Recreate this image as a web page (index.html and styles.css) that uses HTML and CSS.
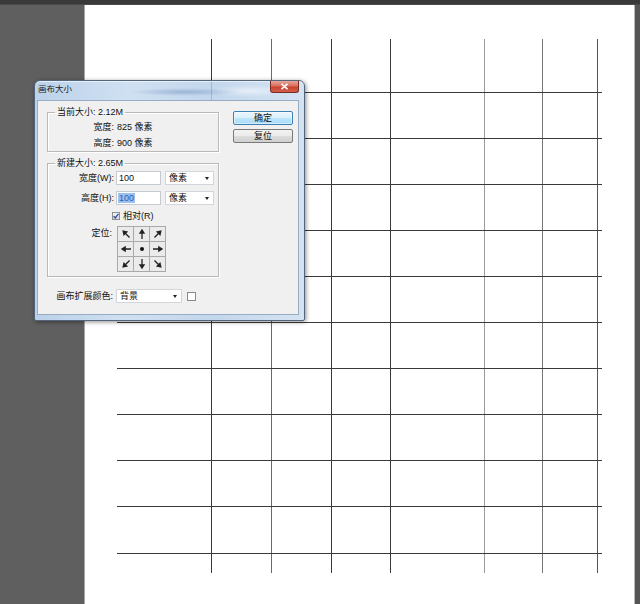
FILE: index.html
```html
<!DOCTYPE html>
<html lang="zh-CN">
<head>
<meta charset="utf-8">
<title>画布大小</title>
<link rel="stylesheet" href="styles.css">
</head>
<body>
<div class="app">
  <div class="topbar"></div>
  <div class="workspace">
    <div class="pasteboard"></div>
    <div class="canvas">
      <svg class="grid" width="549" height="599" viewBox="0 0 549 599">
        <g class="v">
          <line x1="126.5" y1="34" x2="126.5" y2="568" stroke="#3a3a3a"/>
          <line x1="186.5" y1="34" x2="186.5" y2="568" stroke="#6a6a6a"/>
          <line x1="246.5" y1="34" x2="246.5" y2="568" stroke="#3a3a3a"/>
          <line x1="305.5" y1="34" x2="305.5" y2="568" stroke="#3a3a3a"/>
          <line x1="399.5" y1="34" x2="399.5" y2="568" stroke="#9a9a9a"/>
          <line x1="457.5" y1="34" x2="457.5" y2="568" stroke="#777777"/>
          <line x1="512.5" y1="34" x2="512.5" y2="568" stroke="#555555"/>
        </g>
        <g class="h" stroke="#3a3a3a">
          <line x1="32" y1="87.5" x2="517" y2="87.5"/>
          <line x1="32" y1="133.5" x2="517" y2="133.5"/>
          <line x1="32" y1="179.5" x2="517" y2="179.5"/>
          <line x1="32" y1="225.5" x2="517" y2="225.5"/>
          <line x1="32" y1="271.5" x2="517" y2="271.5"/>
          <line x1="32" y1="317.5" x2="517" y2="317.5"/>
          <line x1="32" y1="363.5" x2="517" y2="363.5"/>
          <line x1="32" y1="409.5" x2="517" y2="409.5"/>
          <line x1="32" y1="455.5" x2="517" y2="455.5"/>
          <line x1="32" y1="501.5" x2="517" y2="501.5"/>
          <line x1="32" y1="548.5" x2="517" y2="548.5"/>
        </g>
      </svg>
    </div>
    <div class="rightbar"></div>
  </div>

  <div class="dialog">
    <div class="titlebar">
      <span class="title">画布大小</span>
      <span class="close"><svg width="9" height="7" viewBox="0 0 9 7"><path d="M1.5 0.8 7.5 6.2M7.5 0.8 1.5 6.2" stroke="#fff" stroke-width="1.6"/></svg></span>
    </div>
    <div class="client">
      <div class="left">
        <fieldset class="group g1">
          <legend>当前大小: 2.12M</legend>
          <div class="info-row"><span class="lbl">宽度:</span><span class="val">825 像素</span></div>
          <div class="info-row"><span class="lbl">高度:</span><span class="val">900 像素</span></div>
        </fieldset>
        <fieldset class="group g2">
          <legend>新建大小: 2.65M</legend>
          <div class="form-row">
            <span class="lbl">宽度(W):</span>
            <span class="input">100</span>
            <span class="select">像素<i class="caret"></i></span>
          </div>
          <div class="form-row">
            <span class="lbl">高度(H):</span>
            <span class="input"><span class="sel">100</span></span>
            <span class="select">像素<i class="caret"></i></span>
          </div>
          <div class="check-row">
            <span class="checkbox"><svg width="6" height="6" viewBox="0 0 6 6"><path d="M0.6 3.2 2.3 5 5.4 0.8" fill="none" stroke="#2d4f9a" stroke-width="1.3"/></svg></span>
            <span class="check-lbl">相对(R)</span>
          </div>
          <div class="anchor-row">
            <span class="lbl anchor-lbl">定位:</span>
            <div class="anchor">
              <span class="cell"><svg class="arr r315" viewBox="0 0 12 12"><path d="M6 11V5" stroke="#222" stroke-width="1.3"/><path d="M6 0.8 2.8 5.8h6.4z" fill="#222"/></svg></span>
              <span class="cell"><svg class="arr" viewBox="0 0 12 12"><path d="M6 11V5" stroke="#222" stroke-width="1.3"/><path d="M6 0.8 2.8 5.8h6.4z" fill="#222"/></svg></span>
              <span class="cell"><svg class="arr r45" viewBox="0 0 12 12"><path d="M6 11V5" stroke="#222" stroke-width="1.3"/><path d="M6 0.8 2.8 5.8h6.4z" fill="#222"/></svg></span>
              <span class="cell"><svg class="arr r270" viewBox="0 0 12 12"><path d="M6 11V5" stroke="#222" stroke-width="1.3"/><path d="M6 0.8 2.8 5.8h6.4z" fill="#222"/></svg></span>
              <span class="cell"><svg class="arr" viewBox="0 0 12 12"><circle cx="6" cy="6" r="2" fill="#111"/></svg></span>
              <span class="cell"><svg class="arr r90" viewBox="0 0 12 12"><path d="M6 11V5" stroke="#222" stroke-width="1.3"/><path d="M6 0.8 2.8 5.8h6.4z" fill="#222"/></svg></span>
              <span class="cell"><svg class="arr r225" viewBox="0 0 12 12"><path d="M6 11V5" stroke="#222" stroke-width="1.3"/><path d="M6 0.8 2.8 5.8h6.4z" fill="#222"/></svg></span>
              <span class="cell"><svg class="arr r180" viewBox="0 0 12 12"><path d="M6 11V5" stroke="#222" stroke-width="1.3"/><path d="M6 0.8 2.8 5.8h6.4z" fill="#222"/></svg></span>
              <span class="cell"><svg class="arr r135" viewBox="0 0 12 12"><path d="M6 11V5" stroke="#222" stroke-width="1.3"/><path d="M6 0.8 2.8 5.8h6.4z" fill="#222"/></svg></span>
            </div>
          </div>
        </fieldset>
        <div class="ext-row">
          <span class="ext-lbl">画布扩展颜色:</span>
          <span class="select wide">背景<i class="caret"></i></span>
          <span class="swatch"></span>
        </div>
      </div>
      <div class="buttons">
        <button class="btn default">确定</button>
        <button class="btn">复位</button>
      </div>
    </div>
  </div>
</div>
</body>
</html>
```

FILE: styles.css
```css
* { box-sizing: border-box; }

html, body {
  margin: 0;
  padding: 0;
}

body {
  width: 640px;
  height: 604px;
  overflow: hidden;
  background: #5e5e5e;
  font-family: "Liberation Sans", "Noto Sans CJK SC", sans-serif;
  font-size: 9px;
  color: #111;
}

.app {
  position: relative;
  width: 640px;
  height: 604px;
  display: flex;
  flex-direction: column;
}

.topbar {
  flex: none;
  height: 5px;
  background: #393939;
  border-bottom: 1px solid #4a4a4a;
}

.workspace {
  flex: 1;
  display: flex;
}

.pasteboard {
  flex: none;
  width: 84px;
  background: #5f5f5f;
}

.canvas {
  flex: none;
  width: 551px;
  background: #fff;
  border-left: 1px solid #a8a8a8;
  border-right: 1px solid #b8b8b8;
}

.grid {
  display: block;
}

.rightbar {
  flex: 1;
  background: #555;
}

/* ---------- dialog ---------- */
.dialog {
  position: absolute;
  left: 34px;
  top: 80px;
  width: 271px;
  height: 241px;
  display: flex;
  flex-direction: column;
  padding: 0 5px 5px 2px;
  border: 1px solid #52657b;
  border-radius: 6px 6px 2px 2px;
  background:
    linear-gradient(to right, transparent 176px, rgba(70, 90, 120, 0.25) 176px, rgba(70, 90, 120, 0.25) 177px, transparent 177px),
    radial-gradient(ellipse 55px 4px at 150px 11px, rgba(120, 150, 190, 0.55), transparent),
    radial-gradient(ellipse 40px 6px at 215px 10px, rgba(240, 246, 252, 0.7), transparent),
    linear-gradient(to right, #bcd2ea 0%, #cfe0f2 35%, #c3d7ed 65%, #d4e3f2 100%);
  background-size: 100% 19px, auto, auto, auto;
  background-repeat: no-repeat;
  box-shadow: 1px 1px 4px rgba(0, 0, 0, 0.45), inset 0 1px 0 rgba(255, 255, 255, 0.6);
}

.titlebar {
  flex: none;
  height: 19px;
  display: flex;
  align-items: flex-start;
  justify-content: space-between;
}

.title {
  padding-left: 1px;
  line-height: 17px;
  font-size: 8.5px;
  color: #1a1a1a;
}

.close {
  width: 29px;
  height: 12px;
  display: flex;
  align-items: center;
  justify-content: center;
  border: 1px solid #7a2c22;
  border-top: none;
  border-radius: 0 0 3px 3px;
  background: linear-gradient(#e9a597 0%, #d9705f 45%, #c9432f 55%, #d2604a 100%);
}

.close svg {
  display: block;
}

.client {
  flex: 1;
  display: flex;
  gap: 14px;
  padding: 5px 0 0 9px;
  background: #f0f0f0;
  border: 1px solid #98acc2;
}

.left {
  width: 172px;
  display: flex;
  flex-direction: column;
}

.group {
  margin: 0;
  padding: 0;
  min-inline-size: 0;
  border: 1px solid #b9b9b9;
  box-shadow: inset 1px 1px 0 #fff, 1px 1px 0 #fff;
}

.group legend {
  margin-left: 7px;
  padding: 0 2px;
  line-height: 12px;
}

.g1 {
  padding-top: 1px;
}

.g2 {
  margin-top: 5px;
  padding-top: 2px;
  padding-bottom: 4px;
}

.lbl {
  width: 66px;
  flex: none;
  text-align: right;
}

.info-row {
  display: flex;
  gap: 3px;
  line-height: 16px;
}

.form-row {
  display: flex;
  height: 14px;
  line-height: 12px;
  align-items: center;
}

.form-row + .form-row {
  margin-top: 6px;
}

.form-row .lbl {
  margin-right: 2px;
}

.input {
  width: 45px;
  height: 14px;
  padding: 0 2px;
  display: flex;
  align-items: center;
  background: #fff;
  border: 1px solid #c6cbd1;
}

.sel {
  background: #9cc0ee;
  color: #2a5db5;
  line-height: 10px;
  padding: 0 1px;
  margin-left: -1px;
}

.select {
  width: 49px;
  height: 14px;
  margin-left: 4px;
  padding: 0 0 0 3px;
  display: flex;
  align-items: center;
  background: #fff;
  border: 1px solid #d2d5da;
  line-height: 12px;
}

.caret {
  margin-left: auto;
  margin-right: 4px;
  width: 0;
  height: 0;
  border-left: 2.5px solid transparent;
  border-right: 2.5px solid transparent;
  border-top: 3px solid #222;
}

.check-row {
  display: flex;
  align-items: center;
  height: 14px;
  margin-top: 4px;
  padding-left: 64px;
  gap: 3px;
}

.checkbox {
  width: 8px;
  height: 8px;
  display: flex;
  align-items: center;
  justify-content: center;
  border: 1px solid #8e8f90;
  background: linear-gradient(#f4f4f4, #dcdcdc);
}

.checkbox svg {
  display: block;
}

.check-lbl {
  line-height: 12px;
}

.anchor-row {
  display: flex;
  align-items: flex-start;
  margin-top: 3px;
}

.anchor-lbl {
  padding-right: 2px;
  line-height: 15px;
}

.anchor {
  margin-left: 3px;
  display: grid;
  grid-template-columns: repeat(3, 15px);
  grid-template-rows: repeat(3, 14px);
  gap: 1px;
  padding: 1px;
  background: #a9a9a9;
}

.cell {
  display: flex;
  align-items: center;
  justify-content: center;
  background: #ebebeb;
}

.arr {
  display: block;
  width: 12px;
  height: 12px;
}

.r45 { transform: rotate(45deg); }
.r90 { transform: rotate(90deg); }
.r135 { transform: rotate(135deg); }
.r180 { transform: rotate(180deg); }
.r225 { transform: rotate(225deg); }
.r270 { transform: rotate(270deg); }
.r315 { transform: rotate(315deg); }

.ext-row {
  display: flex;
  align-items: center;
  height: 14px;
  margin-top: 12px;
}

.ext-lbl {
  width: 67px;
  flex: none;
  text-align: right;
  padding-right: 1px;
  line-height: 12px;
}

.select.wide {
  width: 66px;
  margin-left: 2px;
}

.swatch {
  width: 9px;
  height: 9px;
  margin-left: 5px;
  background: #fff;
  border: 1px solid #8a8a8a;
}

.buttons {
  width: 60px;
  padding-top: 5px;
  display: flex;
  flex-direction: column;
  gap: 4px;
}

.btn {
  width: 60px;
  height: 14px;
  margin: 0;
  padding: 0;
  font: inherit;
  line-height: 12px;
  color: #111;
  border: 1px solid #7a7a7a;
  border-radius: 2px;
  background: linear-gradient(#f3f3f3 0%, #ebebeb 50%, #dddddd 51%, #d0d0d0 100%);
}

.btn.default {
  border-color: #3d80b4;
  background: linear-gradient(#eaf6fd 0%, #d9f0fc 50%, #bee6fd 51%, #a9daf6 100%);
  box-shadow: inset 0 0 0 1px rgba(255, 255, 255, 0.5);
}
```
